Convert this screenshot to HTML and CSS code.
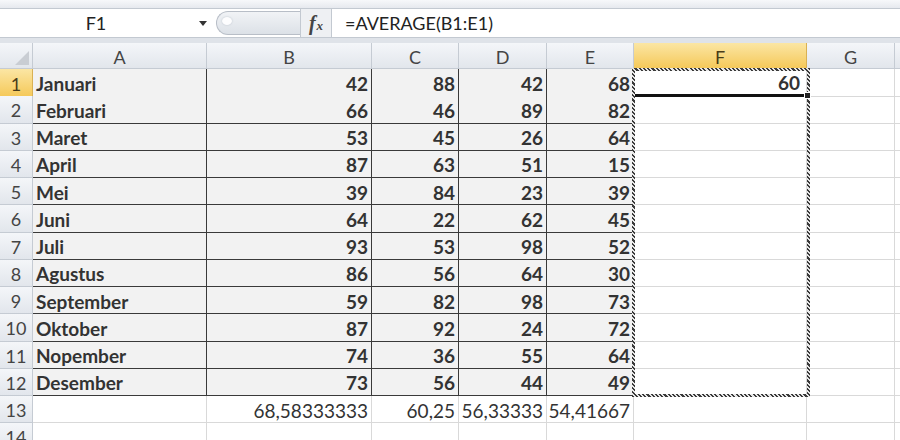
FILE: index.html
```html
<!DOCTYPE html>
<html lang="en">
<head>
    <meta charset="UTF-8">
    <title>Rata-rata - Excel</title>
    <link rel="stylesheet" href="styles.css">
</head>
<body>
    <div class="ribbon-edge"></div>
    <!-- Formula bar -->
    <div class="formula-bar">
        <div class="name-box">
            <span class="name-text">F1</span>
            <span class="name-arrow"></span>
        </div>
        <div class="splitter"><span class="knob"></span></div>
        <div class="fx"><i>f</i><span class="fx-x">x</span></div>
        <div class="formula-input">=AVERAGE(B1:E1)</div>
    </div>
    <div class="bar-gap"></div>

    <!-- Worksheet -->
    <div class="sheet">
        <div class="row head-row">
            <div class="cell corner"><span class="corner-tri"></span></div>
            <div class="cell col-head">A</div>
            <div class="cell col-head">B</div>
            <div class="cell col-head">C</div>
            <div class="cell col-head">D</div>
            <div class="cell col-head">E</div>
            <div class="cell col-head active">F</div>
            <div class="cell col-head">G</div>
            <div class="cell col-head"></div>
        </div>
        <div class="row">
            <div class="cell row-head active">1</div>
            <div class="cell data">Januari</div>
            <div class="cell data num">42</div>
            <div class="cell data num">88</div>
            <div class="cell data num">42</div>
            <div class="cell data num">68</div>
            <div class="cell num active-cell">60</div>
            <div class="cell"></div>
            <div class="cell"></div>
        </div>
        <div class="row">
            <div class="cell row-head">2</div>
            <div class="cell data">Februari</div>
            <div class="cell data num">66</div>
            <div class="cell data num">46</div>
            <div class="cell data num">89</div>
            <div class="cell data num">82</div>
            <div class="cell"></div>
            <div class="cell"></div>
            <div class="cell"></div>
        </div>
        <div class="row">
            <div class="cell row-head">3</div>
            <div class="cell data">Maret</div>
            <div class="cell data num">53</div>
            <div class="cell data num">45</div>
            <div class="cell data num">26</div>
            <div class="cell data num">64</div>
            <div class="cell"></div>
            <div class="cell"></div>
            <div class="cell"></div>
        </div>
        <div class="row">
            <div class="cell row-head">4</div>
            <div class="cell data">April</div>
            <div class="cell data num">87</div>
            <div class="cell data num">63</div>
            <div class="cell data num">51</div>
            <div class="cell data num">15</div>
            <div class="cell"></div>
            <div class="cell"></div>
            <div class="cell"></div>
        </div>
        <div class="row">
            <div class="cell row-head">5</div>
            <div class="cell data">Mei</div>
            <div class="cell data num">39</div>
            <div class="cell data num">84</div>
            <div class="cell data num">23</div>
            <div class="cell data num">39</div>
            <div class="cell"></div>
            <div class="cell"></div>
            <div class="cell"></div>
        </div>
        <div class="row">
            <div class="cell row-head">6</div>
            <div class="cell data">Juni</div>
            <div class="cell data num">64</div>
            <div class="cell data num">22</div>
            <div class="cell data num">62</div>
            <div class="cell data num">45</div>
            <div class="cell"></div>
            <div class="cell"></div>
            <div class="cell"></div>
        </div>
        <div class="row">
            <div class="cell row-head">7</div>
            <div class="cell data">Juli</div>
            <div class="cell data num">93</div>
            <div class="cell data num">53</div>
            <div class="cell data num">98</div>
            <div class="cell data num">52</div>
            <div class="cell"></div>
            <div class="cell"></div>
            <div class="cell"></div>
        </div>
        <div class="row">
            <div class="cell row-head">8</div>
            <div class="cell data">Agustus</div>
            <div class="cell data num">86</div>
            <div class="cell data num">56</div>
            <div class="cell data num">64</div>
            <div class="cell data num">30</div>
            <div class="cell"></div>
            <div class="cell"></div>
            <div class="cell"></div>
        </div>
        <div class="row">
            <div class="cell row-head">9</div>
            <div class="cell data">September</div>
            <div class="cell data num">59</div>
            <div class="cell data num">82</div>
            <div class="cell data num">98</div>
            <div class="cell data num">73</div>
            <div class="cell"></div>
            <div class="cell"></div>
            <div class="cell"></div>
        </div>
        <div class="row">
            <div class="cell row-head">10</div>
            <div class="cell data">Oktober</div>
            <div class="cell data num">87</div>
            <div class="cell data num">92</div>
            <div class="cell data num">24</div>
            <div class="cell data num">72</div>
            <div class="cell"></div>
            <div class="cell"></div>
            <div class="cell"></div>
        </div>
        <div class="row">
            <div class="cell row-head">11</div>
            <div class="cell data">Nopember</div>
            <div class="cell data num">74</div>
            <div class="cell data num">36</div>
            <div class="cell data num">55</div>
            <div class="cell data num">64</div>
            <div class="cell"></div>
            <div class="cell"></div>
            <div class="cell"></div>
        </div>
        <div class="row">
            <div class="cell row-head">12</div>
            <div class="cell data">Desember</div>
            <div class="cell data num">73</div>
            <div class="cell data num">56</div>
            <div class="cell data num">44</div>
            <div class="cell data num">49</div>
            <div class="cell"></div>
            <div class="cell"></div>
            <div class="cell"></div>
        </div>
        <div class="row">
            <div class="cell row-head">13</div>
            <div class="cell"></div>
            <div class="cell num">68,58333333</div>
            <div class="cell num">60,25</div>
            <div class="cell num">56,33333</div>
            <div class="cell num">54,41667</div>
            <div class="cell"></div>
            <div class="cell"></div>
            <div class="cell"></div>
        </div>
        <div class="row">
            <div class="cell row-head">14</div>
            <div class="cell"></div>
            <div class="cell"></div>
            <div class="cell"></div>
            <div class="cell"></div>
            <div class="cell"></div>
            <div class="cell"></div>
            <div class="cell"></div>
            <div class="cell"></div>
        </div>

        <!-- copy range (marching ants) and fill handle -->
        <div class="copy-range"></div>
        <div class="fill-handle"></div>
    </div>
</body>
</html>
```

FILE: styles.css
```css
/* Reset */
* {
    margin: 0;
    padding: 0;
    box-sizing: border-box;
}
body {
    width: 900px;
    height: 440px;
    overflow: hidden;
    background: #fff;
    font-family: Lato, "Liberation Sans", sans-serif;
    color: #333;
}

/* Top edge of the ribbon */
.ribbon-edge {
    height: 9px;
    background: linear-gradient(#f7f8fa, #e6e9ee);
    border-bottom: 1px solid #c3c9d1;
}

/* Formula bar */
.formula-bar {
    display: flex;
    height: 29px;
    background: #fff;
    border-bottom: 1px solid #c3c9d1;
}
.name-box {
    width: 216px;
    display: flex;
    align-items: center;
    font-size: 18px;
    color: #222;
}
.name-text {
    width: 192px;
    text-align: center;
}
.name-arrow {
    width: 0;
    height: 0;
    border-left: 4px solid transparent;
    border-right: 4px solid transparent;
    border-top: 5px solid #333;
    margin-left: 7px;
}
.splitter {
    width: 84px;
    margin: 2px 0 2px 0;
    border: 1px solid #b8bec7;
    border-right: none;
    border-radius: 13px 0 0 13px;
    background: linear-gradient(#f1f3f6, #dce1e7);
    position: relative;
}
.knob {
    position: absolute;
    left: 5px;
    top: 5px;
    width: 10px;
    height: 8px;
    border-radius: 50%;
    background: #fdfdfe;
    box-shadow: 0 0 2px #b9c0c9;
}
.fx {
    width: 32px;
    background: #eef0f3;
    border-left: 1px solid #c3c9d1;
    border-right: 1px solid #c3c9d1;
    font-family: "Liberation Serif", serif;
    font-size: 20px;
    color: #444;
    display: flex;
    align-items: center;
    justify-content: center;
}
.fx i {
    font-weight: bold;
}
.fx-x {
    font-size: 13px;
    font-style: italic;
    font-weight: bold;
    margin-top: 6px;
    margin-left: 1px;
}
.formula-input {
    flex: 1;
    display: flex;
    align-items: center;
    padding-left: 13px;
    font-size: 18px;
    color: #222;
}
.bar-gap {
    height: 5px;
    background: #dfe3e9;
}

/* Worksheet grid */
.sheet {
    position: relative;
}
.row {
    display: grid;
    grid-template-columns: 33px 174px 165px 87px 88px 87px 173px 88px 1fr;
    height: 27.25px;
}
.head-row {
    height: 26px;
}
.cell {
    border-right: 1px solid #d9d9d9;
    border-bottom: 1px solid #d9d9d9;
    display: flex;
    align-items: center;
    padding: 2px 3px 0;
    font-size: 19px;
    white-space: nowrap;
    overflow: visible;
}
.num {
    justify-content: flex-end;
}

/* Headers */
.col-head,
.row-head,
.corner {
    background: linear-gradient(#f4f6f9, #e2e6ec);
    border-color: #c5cbd3;
    color: #444;
    justify-content: center;
    font-size: 18px;
}
.col-head.active,
.row-head.active {
    background: linear-gradient(#fbe6a4, #f5c95a);
    border-color: #d9b153;
    color: #4a3c18;
}
.corner {
    position: relative;
}
.corner-tri {
    position: absolute;
    right: 3px;
    bottom: 3px;
    width: 0;
    height: 0;
    border-left: 14px solid transparent;
    border-bottom: 14px solid #c9cdd3;
}

/* Data block A1:E12 */
.data {
    background: #f2f2f2;
    border-color: #3a3a3a;
    font-weight: bold;
    color: #333;
}
.active-cell {
    font-weight: bold;
    color: #333;
    border-bottom: 3px solid #111;
    padding-right: 6px;
}

/* Marching ants around F1:F12 */
.copy-range {
    position: absolute;
    left: 632px;
    top: 25px;
    width: 178px;
    height: 329px;
    border: 3px solid transparent;
    border-image: repeating-linear-gradient(45deg, #3a3a3a 0 1.5px, #e8e8e8 1.5px 3px) 3;
    pointer-events: none;
}
.fill-handle {
    position: absolute;
    left: 804px;
    top: 49px;
    width: 7px;
    height: 7px;
    background: #222;
    border: 1px solid #fff;
}
```
